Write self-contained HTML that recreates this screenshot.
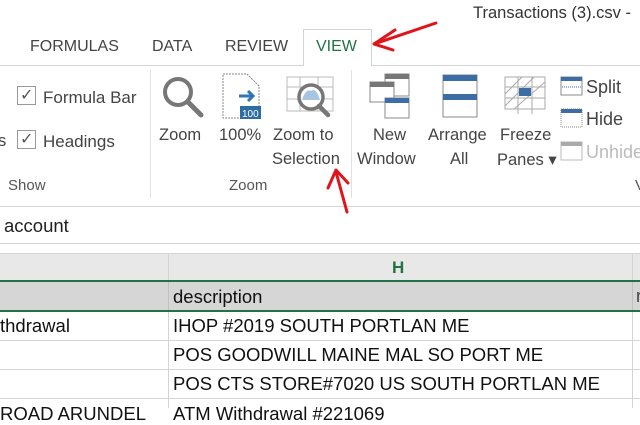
<!DOCTYPE html>
<html><head><style>
*{margin:0;padding:0;box-sizing:border-box}
body{width:640px;height:408px;overflow:hidden;background:#fff;font-family:"Liberation Sans",sans-serif;color:#444;position:relative}
.a{position:absolute;white-space:nowrap}
.tab{font-size:16px;top:38px;color:#444}
.lbl{font-size:16.5px;color:#444}
.cell{font-size:18.5px;color:#111}
</style></head><body>
<div class="a" style="left:473px;top:4px;font-size:16.5px;color:#333">Transactions (3).csv -</div>
<div class="a tab" style="left:30px">FORMULAS</div>
<div class="a tab" style="left:152px">DATA</div>
<div class="a tab" style="left:225px">REVIEW</div>
<div class="a" style="left:303px;top:29px;width:69px;height:37px;border:1px solid #d4d4d4;border-bottom:none;background:#fff;z-index:2"></div>
<div class="a tab" style="left:316px;color:#217346;z-index:3">VIEW</div>
<div class="a" style="left:0;top:65px;width:640px;height:1px;background:#d4d4d4"></div>
<div class="a" style="left:0;top:66px;width:640px;height:141px;background:#fff;border-bottom:1px solid #d4d4d4"></div>
<div class="a" style="left:150px;top:70px;width:1px;height:128px;background:#e1e1e1"></div>
<div class="a" style="left:351px;top:70px;width:1px;height:128px;background:#e1e1e1"></div>
<div class="a" style="left:17px;top:86px;width:19px;height:19px;border:1px solid #999"></div>
<div class="a" style="left:20px;top:85px;font-size:16px;color:#555">✓</div>
<div class="a lbl" style="left:43px;top:88px;font-size:17px">Formula Bar</div>
<div class="a lbl" style="left:-2px;top:132px">s</div>
<div class="a" style="left:17px;top:130px;width:19px;height:19px;border:1px solid #999"></div>
<div class="a" style="left:20px;top:129px;font-size:16px;color:#555">✓</div>
<div class="a lbl" style="left:43px;top:132px;font-size:17px">Headings</div>
<div class="a" style="left:8px;top:177px;font-size:15px;color:#555">Show</div>
<svg class="a" style="left:160px;top:74px" width="45" height="45"><circle cx="18" cy="18" r="13" fill="none" stroke="#777" stroke-width="4"/><line x1="28" y1="28" x2="41" y2="41" stroke="#777" stroke-width="5" stroke-linecap="round"/></svg>
<svg class="a" style="left:221px;top:72px" width="42" height="48"><path d="M2 2H26L38 14V46H2Z" fill="#fff" stroke="#888" stroke-dasharray="2 1"/><path d="M18 24H32M27 19L32 24L27 29" stroke="#2e75b6" stroke-width="3" fill="none"/><rect x="19" y="34" width="21" height="13" fill="#2e6da4"/><text x="21" y="45" font-size="10" fill="#fff" font-family="Liberation Sans">100</text></svg>
<svg class="a" style="left:286px;top:73px" width="50" height="48"><g stroke="#bbb" fill="none"><rect x="1" y="4" width="46" height="34"/><line x1="1" y1="14" x2="47" y2="14"/><line x1="1" y1="26" x2="47" y2="26"/><line x1="14" y1="4" x2="14" y2="38"/><line x1="32" y1="4" x2="32" y2="38"/></g><circle cx="25" cy="24" r="12" fill="#fff" stroke="#777" stroke-width="3.5"/><path d="M16 27Q20 15 25 18Q30 14 34 27Z" fill="#a9c4e0"/><line x1="33" y1="33" x2="42" y2="42" stroke="#777" stroke-width="4.5" stroke-linecap="round"/></svg>
<div class="a lbl" style="left:159px;top:126px">Zoom</div>
<div class="a lbl" style="left:219px;top:126px">100%</div>
<div class="a lbl" style="left:273px;top:126px">Zoom to</div>
<div class="a lbl" style="left:272px;top:150px">Selection</div>
<div class="a" style="left:229px;top:177px;font-size:15px;color:#555">Zoom</div>
<svg class="a" style="left:368px;top:72px" width="44" height="48"><rect x="17" y="2" width="24" height="22" fill="#fff" stroke="#888"/><rect x="17" y="2" width="24" height="5" fill="#777"/><rect x="2" y="10" width="24" height="20" fill="#fff" stroke="#888"/><rect x="2" y="10" width="24" height="5" fill="#777"/><rect x="17" y="26" width="24" height="20" fill="#fff" stroke="#888"/><rect x="17" y="26" width="24" height="5" fill="#3c6ea5"/></svg>
<svg class="a" style="left:441px;top:73px" width="38" height="46"><rect x="2" y="2" width="34" height="42" fill="#fff" stroke="#888"/><rect x="2" y="2" width="34" height="6" fill="#3c6ea5"/><rect x="2" y="21" width="34" height="6" fill="#3c6ea5"/></svg>
<svg class="a" style="left:504px;top:76px" width="44" height="42"><g stroke="#aaa" fill="none"><rect x="1" y="1" width="40" height="32"/><line x1="1" y1="11" x2="41" y2="11"/><line x1="1" y1="22" x2="41" y2="22"/><line x1="14" y1="1" x2="14" y2="38"/><line x1="28" y1="1" x2="28" y2="38"/><line x1="1" y1="30" x2="30" y2="1"/><line x1="1" y1="18" x2="18" y2="1"/><line x1="10" y1="33" x2="41" y2="6"/></g><rect x="15" y="12" width="12" height="8" fill="#3c6ea5"/></svg>
<div class="a lbl" style="left:373px;top:126px">New</div>
<div class="a lbl" style="left:357px;top:150px">Window</div>
<div class="a lbl" style="left:428px;top:126px">Arrange</div>
<div class="a lbl" style="left:450px;top:150px">All</div>
<div class="a lbl" style="left:500px;top:126px">Freeze</div>
<div class="a lbl" style="left:497px;top:150px">Panes ▾</div>
<svg class="a" style="left:560px;top:76px" width="24" height="90"><rect x="1" y="1" width="21" height="18" fill="#fff" stroke="#888"/><rect x="1" y="1" width="21" height="4" fill="#3c6ea5"/><line x1="2" y1="11" x2="21" y2="11" stroke="#3c6ea5" stroke-dasharray="1 1"/><rect x="1" y="33" width="21" height="18" fill="#fff" stroke="#888" stroke-dasharray="1 1"/><rect x="1" y="33" width="21" height="4" fill="#3c6ea5"/><rect x="1" y="66" width="21" height="18" fill="#fff" stroke="#bbb"/><rect x="1" y="66" width="21" height="4" fill="#aaa"/></svg>
<div class="a lbl" style="left:586px;top:77px;font-size:18px">Split</div>
<div class="a lbl" style="left:586px;top:109px;font-size:18px">Hide</div>
<div class="a lbl" style="left:586px;top:142px;font-size:18px;color:#bbb">Unhide</div>
<div class="a" style="left:635px;top:177px;font-size:15px;color:#555">V</div>
<div class="a" style="left:0;top:243px;width:640px;height:1px;background:#d4d4d4"></div>
<div class="a cell" style="left:4px;top:215px;color:#222">account</div>
<div class="a" style="left:0;top:253px;width:640px;height:28px;background:#e8e8e8;border-top:1px solid #d4d4d4"></div>
<div class="a" style="left:168px;top:253px;width:1px;height:155px;background:#d4d4d4"></div>
<div class="a" style="left:632px;top:253px;width:1px;height:155px;background:#d4d4d4"></div>
<div class="a" style="left:392px;top:258px;font-size:17px;font-weight:bold;color:#217346">H</div>
<div class="a" style="left:0;top:280px;width:640px;height:2px;background:#217346"></div>
<div class="a" style="left:0;top:282px;width:640px;height:29px;background:#d6d6d6"></div>
<div class="a" style="left:168px;top:282px;width:1px;height:29px;background:#c0c0c0"></div>
<div class="a" style="left:632px;top:282px;width:1px;height:29px;background:#c0c0c0"></div>
<div class="a" style="left:0;top:310px;width:640px;height:2px;background:#217346"></div>
<div class="a" style="left:0;top:340px;width:640px;height:1px;background:#d4d4d4"></div>
<div class="a" style="left:0;top:369px;width:640px;height:1px;background:#d4d4d4"></div>
<div class="a" style="left:0;top:398px;width:640px;height:1px;background:#d4d4d4"></div>
<div class="a cell" style="left:173px;top:286px">description</div>
<div class="a cell" style="left:0;top:315px">thdrawal</div>
<div class="a cell" style="left:173px;top:315px">IHOP #2019 SOUTH PORTLAN ME</div>
<div class="a cell" style="left:173px;top:344px">POS GOODWILL MAINE MAL SO PORT ME</div>
<div class="a cell" style="left:173px;top:373px">POS CTS STORE#7020 US SOUTH PORTLAN ME</div>
<div class="a cell" style="left:0;top:403px">ROAD ARUNDEL</div>
<div class="a cell" style="left:173px;top:403px">ATM Withdrawal #221069</div>
<div class="a" style="left:636px;top:286px;font-size:18px">r</div>
<svg class="a" style="left:0;top:0;z-index:5" width="640" height="408"><g stroke="#e0141b" stroke-width="3" fill="none" stroke-linecap="round" stroke-linejoin="round"><path d="M436 23L377 43"/><path d="M395 30L374 44L393 50"/><path d="M347 212L336 172"/><path d="M328 188L336 170L348 183"/></g></svg>
</body></html>
